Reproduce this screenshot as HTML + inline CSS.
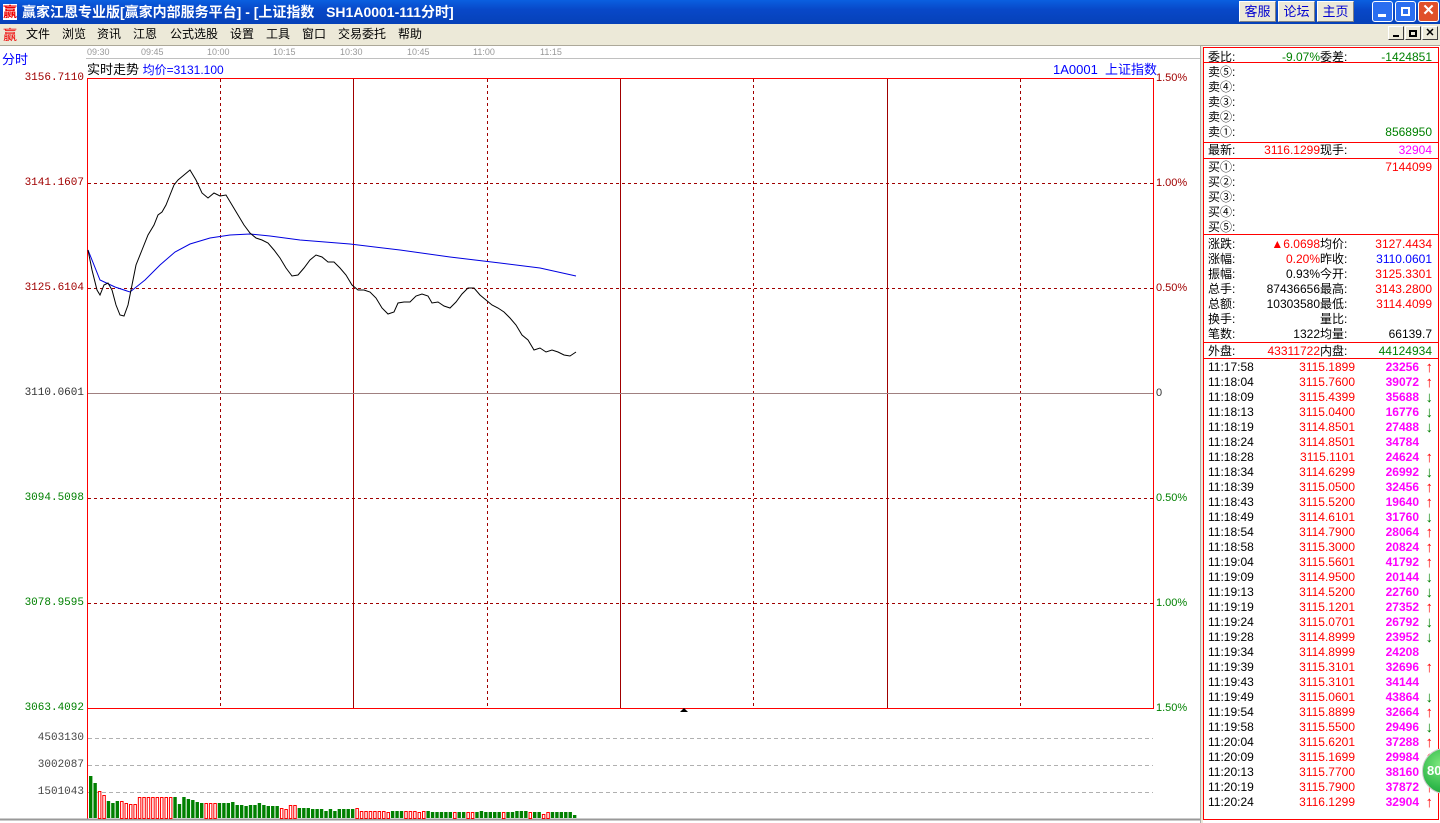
<!DOCTYPE html>
<html><head><meta charset="utf-8"><style>
*{margin:0;padding:0;box-sizing:border-box}
body{width:1440px;height:823px;overflow:hidden;background:#fff;font-family:"Liberation Sans","Noto Sans CJK SC",sans-serif;font-size:12px;position:relative}
.a{position:absolute;white-space:nowrap;line-height:15px}
#title{position:absolute;left:0;top:0;width:1440px;height:24px;background:linear-gradient(#0a5fe0,#0848c8 40%,#0641b8);}
#menu{position:absolute;left:0;top:24px;width:1440px;height:22px;background:#ece9d8;border-bottom:1px solid #aca899}
.btn{position:absolute;top:1px;height:21px;background:#ece9d8;border:1px solid #fff;border-right-color:#808080;border-bottom-color:#808080;color:#0000d0;font-size:13px;text-align:center;line-height:19px}
.wb{position:absolute;top:1px;width:21px;height:21px;border:1px solid #fff;border-radius:3px;background:#2a6ef0}
.sb{position:absolute;top:2px;width:16px;height:14px;background:#ece9d8;border:1px solid #fff;border-right-color:#404040;border-bottom-color:#404040}
.box{position:absolute;left:1203px;width:236px;border:1px solid #f00}
.red{color:#f00}.grn{color:#008000}.mag{color:#f0f}.blu{color:#00f}
.row{position:absolute;left:1208px;width:228px;height:15px;line-height:15px}
.row span{position:absolute}
#list .row span:nth-child(4){font-size:15px;line-height:15px;right:3px!important}
</style></head><body>
<div id="title">
<div class="a" style="left:3px;top:4px;color:#e00;font-size:14px;font-weight:bold;background:#fff;line-height:16px">赢</div>
<div class="a" style="left:22px;top:3px;color:#fff;font-size:14px;font-weight:bold;line-height:18px">赢家江恩专业版[赢家内部服务平台] - [上证指数&nbsp;&nbsp;&nbsp;SH1A0001-111分时]</div>
<div class="btn" style="left:1239px;width:37px">客服</div>
<div class="btn" style="left:1278px;width:37px">论坛</div>
<div class="btn" style="left:1317px;width:37px">主页</div>
<div class="wb" style="left:1372px"><div style="position:absolute;left:5px;top:12px;width:8px;height:3px;background:#fff"></div></div>
<div class="wb" style="left:1395px"><div style="position:absolute;left:5px;top:5px;width:9px;height:9px;border:2px solid #fff"></div></div>
<div class="wb" style="left:1418px;background:#e0502a;color:#fff;font-weight:bold;font-size:15px;text-align:center;line-height:18px">✕</div>
</div>
<div id="menu">
<div class="a" style="left:3px;top:3px;color:#e00;font-size:14px;line-height:16px">赢</div>
<div class="a" style="left:26px;top:3px">文件</div>
<div class="a" style="left:62px;top:3px">浏览</div>
<div class="a" style="left:97px;top:3px">资讯</div>
<div class="a" style="left:133px;top:3px">江恩</div>
<div class="a" style="left:170px;top:3px">公式选股</div>
<div class="a" style="left:230px;top:3px">设置</div>
<div class="a" style="left:266px;top:3px">工具</div>
<div class="a" style="left:302px;top:3px">窗口</div>
<div class="a" style="left:338px;top:3px">交易委托</div>
<div class="a" style="left:398px;top:3px">帮助</div>
<div class="sb" style="left:1388px"><div style="position:absolute;left:4px;top:8px;width:6px;height:2px;background:#000"></div></div>
<div class="sb" style="left:1405px"><div style="position:absolute;left:3px;top:3px;width:8px;height:7px;border:2px solid #000"></div></div>
<div class="sb" style="left:1422px;font-weight:bold;font-size:11px;text-align:center;line-height:12px">✕</div>
</div>
<div style="position:absolute;left:86px;top:47px;width:1114px;height:12px;border-bottom:1px solid #c0c0c0"></div>
<div class="a" style="left:87px;top:46px;font-size:9px;color:#999;line-height:12px">09:30</div>
<div class="a" style="left:141px;top:46px;font-size:9px;color:#999;line-height:12px">09:45</div>
<div class="a" style="left:207px;top:46px;font-size:9px;color:#999;line-height:12px">10:00</div>
<div class="a" style="left:273px;top:46px;font-size:9px;color:#999;line-height:12px">10:15</div>
<div class="a" style="left:340px;top:46px;font-size:9px;color:#999;line-height:12px">10:30</div>
<div class="a" style="left:407px;top:46px;font-size:9px;color:#999;line-height:12px">10:45</div>
<div class="a" style="left:473px;top:46px;font-size:9px;color:#999;line-height:12px">11:00</div>
<div class="a" style="left:540px;top:46px;font-size:9px;color:#999;line-height:12px">11:15</div>
<div class="a blu" style="left:2px;top:52px;font-size:13px">分时</div>
<div class="a" style="left:87px;top:62px;font-size:13px">实时走势 <span class="blu" style="font-size:12px">均价=3131.100</span></div>
<div class="a blu" style="left:1053px;top:62px;font-size:13px">1A0001&nbsp; 上证指数</div>
<svg style="position:absolute;left:0;top:0" width="1202" height="823">
<g fill="none" stroke-width="1">
<line x1="87.5" y1="78" x2="87.5" y2="820" stroke="#f00"/>
<line x1="1153.5" y1="78" x2="1153.5" y2="708" stroke="#f00"/>
<line x1="87" y1="78.5" x2="1154" y2="78.5" stroke="#f00"/>
<line x1="87" y1="708.5" x2="1154" y2="708.5" stroke="#f00"/>
<g stroke="#a00000" stroke-dasharray="3,3">
<line x1="220.5" y1="79" x2="220.5" y2="708"/><line x1="487.5" y1="79" x2="487.5" y2="708"/><line x1="753.5" y1="79" x2="753.5" y2="708"/><line x1="1020.5" y1="79" x2="1020.5" y2="708"/>
<line x1="88" y1="183.5" x2="1153" y2="183.5"/><line x1="88" y1="288.5" x2="1153" y2="288.5"/><line x1="88" y1="498.5" x2="1153" y2="498.5"/><line x1="88" y1="603.5" x2="1153" y2="603.5"/>
</g>
<g stroke="#a00000"><line x1="353.5" y1="79" x2="353.5" y2="708"/><line x1="620.5" y1="79" x2="620.5" y2="708"/><line x1="887.5" y1="79" x2="887.5" y2="708"/></g>
<line x1="88" y1="393.5" x2="1153" y2="393.5" stroke="#a08080"/>
<g stroke="#b0b0b0" stroke-dasharray="4,3"><line x1="88" y1="738.5" x2="1153" y2="738.5"/><line x1="88" y1="765.5" x2="1153" y2="765.5"/><line x1="88" y1="792.5" x2="1153" y2="792.5"/></g>
<line x1="0" y1="819.5" x2="1202" y2="819.5" stroke="#999" stroke-width="2"/>
<polyline stroke="#0000e0" points="88,250 100,280 115,287 130,292 145,280 160,265 175,252 190,244 210,238 230,235 250,234 270,236 300,240 350,244 400,250 450,257 500,263 540,268 576,276"/>
<polyline stroke="#000" points="88,250 92,270 97,290 100,295 104,285 108,283 112,290 116,305 120,315 124,316 128,305 132,285 136,265 142,250 148,235 154,225 158,215 162,212 166,205 170,195 174,185 178,180 184,175 190,170 196,180 202,193 208,198 214,193 220,196 226,195 232,205 238,215 244,225 250,233 256,238 262,240 268,243 274,250 280,258 286,268 292,276 298,275 304,268 310,260 316,255 322,257 328,262 334,262 340,268 346,275 352,285 358,290 364,290 370,292 376,298 382,308 388,314 394,312 398,303 404,302 410,302 416,296 422,294 428,296 432,303 438,302 444,306 450,308 456,302 462,294 468,288 474,288 480,295 486,300 492,305 498,308 504,312 510,318 516,325 522,335 528,340 534,350 540,348 546,352 552,350 558,352 564,355 570,356 576,352"/>
</g>
<polygon points="680,712 684,708 688,712" fill="#000"/>
<g id="bars"></g>
</svg>
<div class="a" style="left:0;top:71px;width:84px;text-align:right;color:#a00000;font-family:'Liberation Mono',monospace;font-size:11px">3156.7110</div>
<div class="a" style="left:0;top:176px;width:84px;text-align:right;color:#a00000;font-family:'Liberation Mono',monospace;font-size:11px">3141.1607</div>
<div class="a" style="left:0;top:281px;width:84px;text-align:right;color:#a00000;font-family:'Liberation Mono',monospace;font-size:11px">3125.6104</div>
<div class="a" style="left:0;top:386px;width:84px;text-align:right;color:#333;font-family:'Liberation Mono',monospace;font-size:11px">3110.0601</div>
<div class="a" style="left:0;top:491px;width:84px;text-align:right;color:#008000;font-family:'Liberation Mono',monospace;font-size:11px">3094.5098</div>
<div class="a" style="left:0;top:596px;width:84px;text-align:right;color:#008000;font-family:'Liberation Mono',monospace;font-size:11px">3078.9595</div>
<div class="a" style="left:0;top:701px;width:84px;text-align:right;color:#008000;font-family:'Liberation Mono',monospace;font-size:11px">3063.4092</div>
<div class="a" style="left:0;top:731px;width:84px;text-align:right;color:#444;font-family:'Liberation Mono',monospace;font-size:11px">4503130</div>
<div class="a" style="left:0;top:758px;width:84px;text-align:right;color:#444;font-family:'Liberation Mono',monospace;font-size:11px">3002087</div>
<div class="a" style="left:0;top:785px;width:84px;text-align:right;color:#444;font-family:'Liberation Mono',monospace;font-size:11px">1501043</div>
<div class="a" style="left:1156px;top:71px;color:#a00000;font-size:11px">1.50%</div>
<div class="a" style="left:1156px;top:176px;color:#a00000;font-size:11px">1.00%</div>
<div class="a" style="left:1156px;top:281px;color:#a00000;font-size:11px">0.50%</div>
<div class="a" style="left:1156px;top:386px;color:#333;font-size:11px">0</div>
<div class="a" style="left:1156px;top:491px;color:#008000;font-size:11px">0.50%</div>
<div class="a" style="left:1156px;top:596px;color:#008000;font-size:11px">1.00%</div>
<div class="a" style="left:1156px;top:701px;color:#008000;font-size:11px">1.50%</div>
<div style="position:absolute;left:1200px;top:46px;width:3px;height:777px;background:#ece9d8;border-left:1px solid #aaa"></div>
<div class="box" style="top:47px;height:16px"></div>
<div class="box" style="top:62px;height:81px"></div>
<div class="box" style="top:142px;height:17px"></div>
<div class="box" style="top:158px;height:77px"></div>
<div class="box" style="top:234px;height:109px"></div>
<div class="box" style="top:342px;height:17px"></div>
<div class="box" style="top:358px;height:462px"></div>
<div class="row" style="top:50px"><span>委比:</span><span class="grn" style="right:116px">-9.07%</span><span style="left:112px">委差:</span><span class="grn" style="right:4px">-1424851</span></div>
<div class="row" style="top:65px"><span>卖⑤:</span></div>
<div class="row" style="top:80px"><span>卖④:</span></div>
<div class="row" style="top:95px"><span>卖③:</span></div>
<div class="row" style="top:110px"><span>卖②:</span></div>
<div class="row" style="top:125px"><span>卖①:</span><span class="grn" style="right:4px">8568950</span></div>
<div class="row" style="top:143px"><span>最新:</span><span class="red" style="right:116px">3116.1299</span><span style="left:112px">现手:</span><span class="mag" style="right:4px">32904</span></div>
<div class="row" style="top:160px"><span>买①:</span><span class="red" style="right:4px">7144099</span></div>
<div class="row" style="top:175px"><span>买②:</span></div>
<div class="row" style="top:190px"><span>买③:</span></div>
<div class="row" style="top:205px"><span>买④:</span></div>
<div class="row" style="top:220px"><span>买⑤:</span></div>
<div class="row" style="top:237px"><span>涨跌:</span><span class="red" style="right:116px">▲6.0698</span><span style="left:112px">均价:</span><span class="red" style="right:4px">3127.4434</span></div>
<div class="row" style="top:252px"><span>涨幅:</span><span class="red" style="right:116px">0.20%</span><span style="left:112px">昨收:</span><span class="blu" style="right:4px">3110.0601</span></div>
<div class="row" style="top:267px"><span>振幅:</span><span style="right:116px">0.93%</span><span style="left:112px">今开:</span><span class="red" style="right:4px">3125.3301</span></div>
<div class="row" style="top:282px"><span>总手:</span><span style="right:116px">87436656</span><span style="left:112px">最高:</span><span class="red" style="right:4px">3143.2800</span></div>
<div class="row" style="top:297px"><span>总额:</span><span style="right:116px">10303580</span><span style="left:112px">最低:</span><span class="red" style="right:4px">3114.4099</span></div>
<div class="row" style="top:312px"><span>换手:</span><span style="left:112px">量比:</span></div>
<div class="row" style="top:327px"><span>笔数:</span><span style="right:116px">1322</span><span style="left:112px">均量:</span><span style="right:4px">66139.7</span></div>
<div class="row" style="top:344px"><span>外盘:</span><span class="red" style="right:116px">43311722</span><span style="left:112px">内盘:</span><span class="grn" style="right:4px">44124934</span></div>
<div id="list">
<div class="row" style="top:360px"><span>11:17:58</span><span class="red" style="right:81px">3115.1899</span><span class="mag" style="right:17px;font-weight:bold">23256</span><span class="red" style="font-weight:bold">↑</span></div>
<div class="row" style="top:375px"><span>11:18:04</span><span class="red" style="right:81px">3115.7600</span><span class="mag" style="right:17px;font-weight:bold">39072</span><span class="red" style="font-weight:bold">↑</span></div>
<div class="row" style="top:390px"><span>11:18:09</span><span class="red" style="right:81px">3115.4399</span><span class="mag" style="right:17px;font-weight:bold">35688</span><span class="grn" style="font-weight:bold">↓</span></div>
<div class="row" style="top:405px"><span>11:18:13</span><span class="red" style="right:81px">3115.0400</span><span class="mag" style="right:17px;font-weight:bold">16776</span><span class="grn" style="font-weight:bold">↓</span></div>
<div class="row" style="top:420px"><span>11:18:19</span><span class="red" style="right:81px">3114.8501</span><span class="mag" style="right:17px;font-weight:bold">27488</span><span class="grn" style="font-weight:bold">↓</span></div>
<div class="row" style="top:435px"><span>11:18:24</span><span class="red" style="right:81px">3114.8501</span><span class="mag" style="right:17px;font-weight:bold">34784</span></div>
<div class="row" style="top:450px"><span>11:18:28</span><span class="red" style="right:81px">3115.1101</span><span class="mag" style="right:17px;font-weight:bold">24624</span><span class="red" style="font-weight:bold">↑</span></div>
<div class="row" style="top:465px"><span>11:18:34</span><span class="red" style="right:81px">3114.6299</span><span class="mag" style="right:17px;font-weight:bold">26992</span><span class="grn" style="font-weight:bold">↓</span></div>
<div class="row" style="top:480px"><span>11:18:39</span><span class="red" style="right:81px">3115.0500</span><span class="mag" style="right:17px;font-weight:bold">32456</span><span class="red" style="font-weight:bold">↑</span></div>
<div class="row" style="top:495px"><span>11:18:43</span><span class="red" style="right:81px">3115.5200</span><span class="mag" style="right:17px;font-weight:bold">19640</span><span class="red" style="font-weight:bold">↑</span></div>
<div class="row" style="top:510px"><span>11:18:49</span><span class="red" style="right:81px">3114.6101</span><span class="mag" style="right:17px;font-weight:bold">31760</span><span class="grn" style="font-weight:bold">↓</span></div>
<div class="row" style="top:525px"><span>11:18:54</span><span class="red" style="right:81px">3114.7900</span><span class="mag" style="right:17px;font-weight:bold">28064</span><span class="red" style="font-weight:bold">↑</span></div>
<div class="row" style="top:540px"><span>11:18:58</span><span class="red" style="right:81px">3115.3000</span><span class="mag" style="right:17px;font-weight:bold">20824</span><span class="red" style="font-weight:bold">↑</span></div>
<div class="row" style="top:555px"><span>11:19:04</span><span class="red" style="right:81px">3115.5601</span><span class="mag" style="right:17px;font-weight:bold">41792</span><span class="red" style="font-weight:bold">↑</span></div>
<div class="row" style="top:570px"><span>11:19:09</span><span class="red" style="right:81px">3114.9500</span><span class="mag" style="right:17px;font-weight:bold">20144</span><span class="grn" style="font-weight:bold">↓</span></div>
<div class="row" style="top:585px"><span>11:19:13</span><span class="red" style="right:81px">3114.5200</span><span class="mag" style="right:17px;font-weight:bold">22760</span><span class="grn" style="font-weight:bold">↓</span></div>
<div class="row" style="top:600px"><span>11:19:19</span><span class="red" style="right:81px">3115.1201</span><span class="mag" style="right:17px;font-weight:bold">27352</span><span class="red" style="font-weight:bold">↑</span></div>
<div class="row" style="top:615px"><span>11:19:24</span><span class="red" style="right:81px">3115.0701</span><span class="mag" style="right:17px;font-weight:bold">26792</span><span class="grn" style="font-weight:bold">↓</span></div>
<div class="row" style="top:630px"><span>11:19:28</span><span class="red" style="right:81px">3114.8999</span><span class="mag" style="right:17px;font-weight:bold">23952</span><span class="grn" style="font-weight:bold">↓</span></div>
<div class="row" style="top:645px"><span>11:19:34</span><span class="red" style="right:81px">3114.8999</span><span class="mag" style="right:17px;font-weight:bold">24208</span></div>
<div class="row" style="top:660px"><span>11:19:39</span><span class="red" style="right:81px">3115.3101</span><span class="mag" style="right:17px;font-weight:bold">32696</span><span class="red" style="font-weight:bold">↑</span></div>
<div class="row" style="top:675px"><span>11:19:43</span><span class="red" style="right:81px">3115.3101</span><span class="mag" style="right:17px;font-weight:bold">34144</span></div>
<div class="row" style="top:690px"><span>11:19:49</span><span class="red" style="right:81px">3115.0601</span><span class="mag" style="right:17px;font-weight:bold">43864</span><span class="grn" style="font-weight:bold">↓</span></div>
<div class="row" style="top:705px"><span>11:19:54</span><span class="red" style="right:81px">3115.8899</span><span class="mag" style="right:17px;font-weight:bold">32664</span><span class="red" style="font-weight:bold">↑</span></div>
<div class="row" style="top:720px"><span>11:19:58</span><span class="red" style="right:81px">3115.5500</span><span class="mag" style="right:17px;font-weight:bold">29496</span><span class="grn" style="font-weight:bold">↓</span></div>
<div class="row" style="top:735px"><span>11:20:04</span><span class="red" style="right:81px">3115.6201</span><span class="mag" style="right:17px;font-weight:bold">37288</span><span class="red" style="font-weight:bold">↑</span></div>
<div class="row" style="top:750px"><span>11:20:09</span><span class="red" style="right:81px">3115.1699</span><span class="mag" style="right:17px;font-weight:bold">29984</span><span class="red" style="font-weight:bold">↑</span></div>
<div class="row" style="top:765px"><span>11:20:13</span><span class="red" style="right:81px">3115.7700</span><span class="mag" style="right:17px;font-weight:bold">38160</span><span class="red" style="font-weight:bold">↑</span></div>
<div class="row" style="top:780px"><span>11:20:19</span><span class="red" style="right:81px">3115.7900</span><span class="mag" style="right:17px;font-weight:bold">37872</span><span class="red" style="font-weight:bold">↑</span></div>
<div class="row" style="top:795px"><span>11:20:24</span><span class="red" style="right:81px">3116.1299</span><span class="mag" style="right:17px;font-weight:bold">32904</span><span class="red" style="font-weight:bold">↑</span></div>
</div>
<div style="position:absolute;left:1422px;top:748px;width:46px;height:46px;border-radius:50%;background:radial-gradient(circle at 40% 35%,#7de87d,#2fb84a 60%,#1a8a30);border:1px solid #ccc;color:#fff;font-weight:bold;font-size:13px;line-height:44px;padding-left:4px">80</div>
<script>
(function(){
var g=document.getElementById('bars');
var c="ggrrgggrrrrrrrrrrrrgggggggrrrggggggggggggggrrrrgggggggggggggrrrrrrrrgggrrrrrggggggrggrrggggggrgggggrggrrggggggrgg";
var s='';
var H=[42,35,27,23,17,15,17,17,15,14,14,13,13,13,13,13,13,13,13,13,14,13,12,11,10,9,9,9,9,9,9,9,10,8,8,7,8,8,9,8,7,7,7,6,5,8,8,6,6,6,5,5,5,4,5,4,5,5,5,5,6,4,4,4,4,4,4,3,4,4,4,4,4,4,3,4,4,3,3,3,3,3,3,3,3,3,3,3,4,3,3,3,3,3,3,3,4,4,4,3,3,3,2,3,3,3,3,3,3,2];
for(var i=0;i<110;i++){var x=89+i*4.44,hh=H[i]<14?Math.round(H[i]*1.5+1):H[i];var r=c[i]==='r';
if(i==109)hh=3;
if(r)s+='<rect x="'+(x+0.5)+'" y="'+(818.5-hh)+'" width="2.5" height="'+hh+'" fill="none" stroke="#f00"/>';
else s+='<rect x="'+x+'" y="'+(818-hh)+'" width="3.4" height="'+hh+'" fill="#008000"/>';}
g.innerHTML=s;
})();
</script>
</body></html>
